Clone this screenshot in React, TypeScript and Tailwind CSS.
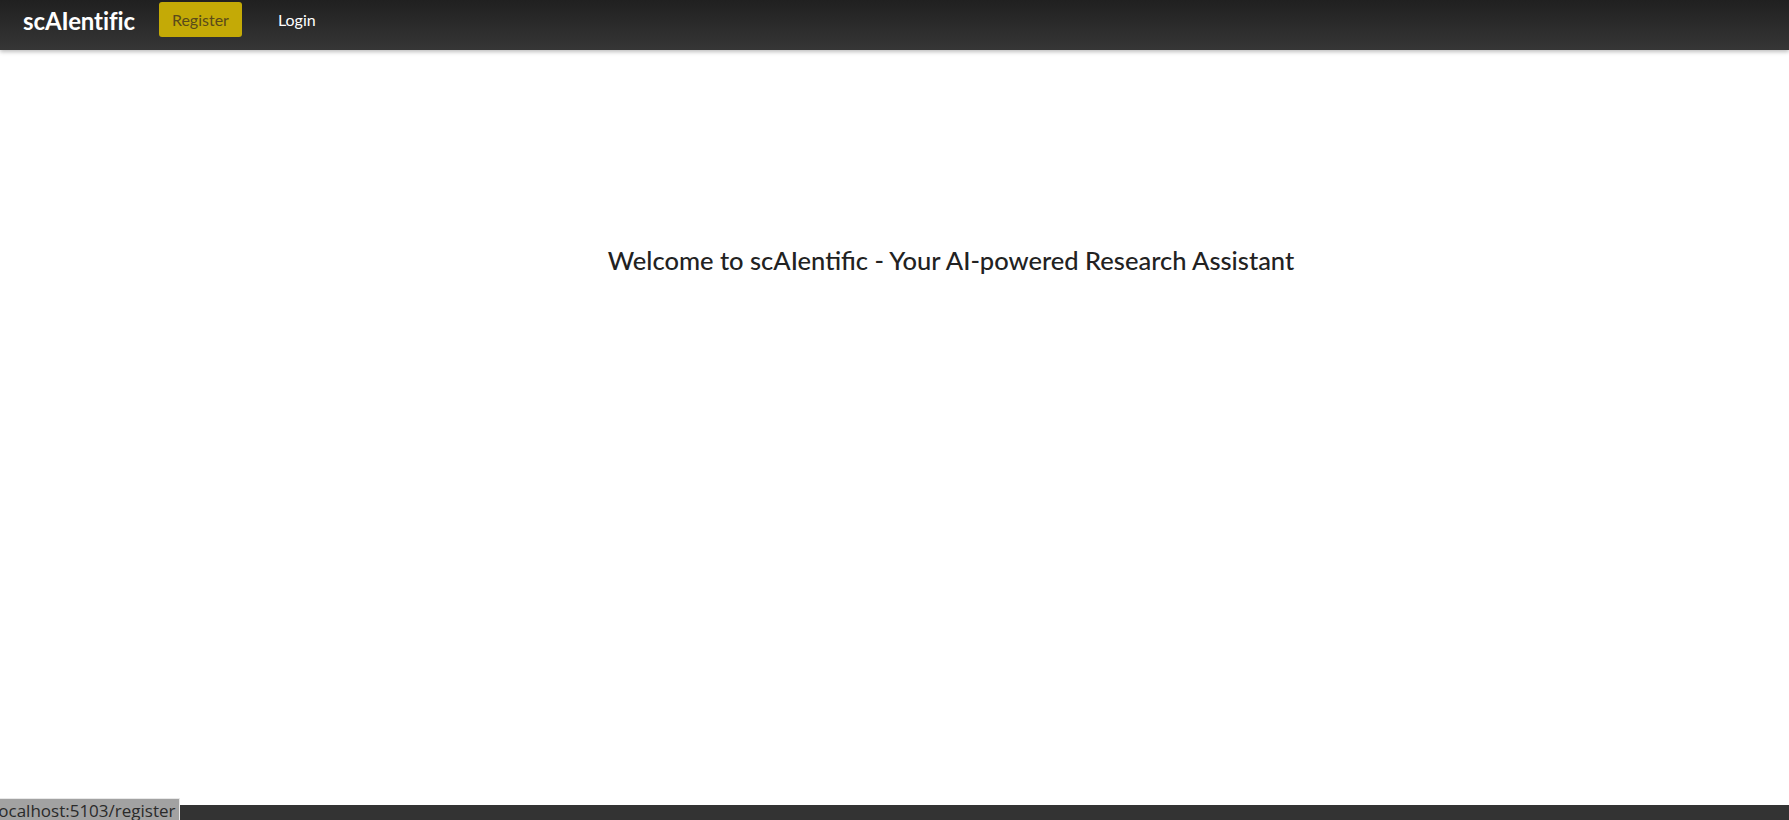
import React from "react";

export default function App() {
  return (
    <div className="relative flex h-[820px] w-full flex-col bg-white font-['Lato','Noto_Sans',sans-serif]">
      <header className="relative z-10 flex h-[50px] items-start bg-gradient-to-b from-[#202020] to-[#363636] pl-[23px] shadow-[0_2px_4px_rgba(0,0,0,0.25)]">
        <span className="mt-[6px] text-[24px] font-bold leading-[30px] tracking-[-0.1px] text-white">scAIentific</span>
        <div className="ml-[24px] mt-[2px] flex h-[35px] w-[83px] items-center justify-center rounded-[3px] bg-[#c4aa06] text-[16px] text-[#5a4a1a]">
          Register
        </div>
        <span className="ml-[36px] mt-[2px] flex h-[35px] items-center text-[16px] text-white">Login</span>
      </header>
      <main className="flex flex-1 justify-center pl-[113px] pt-[193px]">
        <h1 className="text-[25.5px] font-medium leading-[34px] text-[#222]">
          Welcome to scAIentific - Your AI-powered Research Assistant
        </h1>
      </main>
      <footer className="h-[15px] w-full bg-[#333333]" />
      <div className="absolute bottom-0 left-0 flex h-[22px] w-[180px] items-center overflow-hidden whitespace-nowrap border-t border-r border-[#e8e8e8] bg-[#a2a2a2] font-['Open_Sans',sans-serif] text-[17px] leading-none text-[#2a2a2a]">
        <span className="-ml-[6px] mt-[2px]">localhost:5103/register</span>
      </div>
    </div>
  );
}
